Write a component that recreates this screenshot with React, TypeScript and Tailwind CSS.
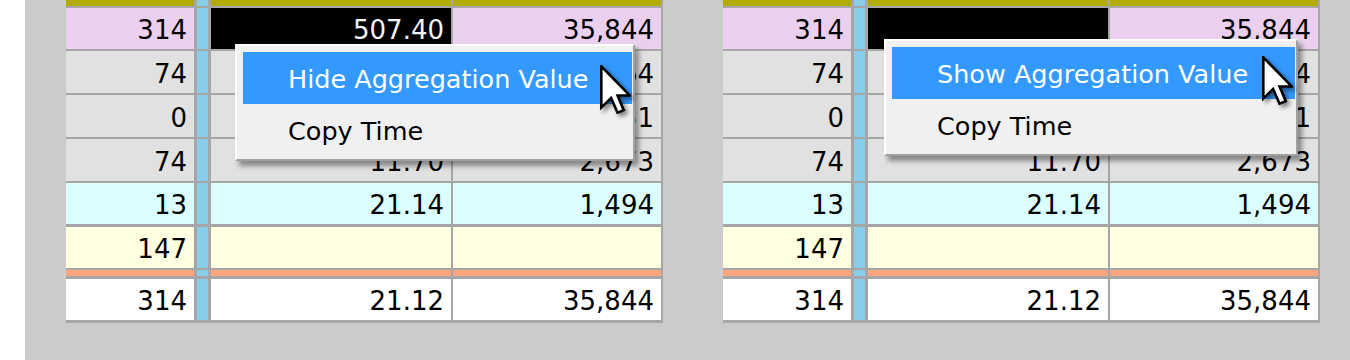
import React from 'react';

type Row = {
    bg: string;
    h: string;
    cells: [string, string, string];
    black?: boolean;
};

const font = { fontFamily: '"DejaVu Sans", Verdana, sans-serif' };

const makeRows = (aggValue: string): Row[] => [
    { bg: 'bg-[#ead0ee]', h: 'h-[41px]', cells: ['314', aggValue, '35,844'], black: true },
    { bg: 'bg-[#e1e1e1]', h: 'h-[42px]', cells: ['74', '13.33', '9,864'] },
    { bg: 'bg-[#e1e1e1]', h: 'h-[42px]', cells: ['0', '11.82', '3,751'] },
    { bg: 'bg-[#e1e1e1]', h: 'h-[42px]', cells: ['74', '11.70', '2,673'] },
    { bg: 'bg-[#dbffff]', h: 'h-[41px]', cells: ['13', '21.14', '1,494'] },
    { bg: 'bg-[#ffffe2]', h: 'h-[41px]', cells: ['147', '', ''] },
];

const cellText = "flex items-center justify-end pr-[7px] pt-[3px] text-[26px] text-black leading-none";

const BandRow: React.FC<{ color: string; h: string }> = ({ color, h }) => (
    <div className={`flex ${h}`}>
        <div className={`w-[128px] ${color}`}></div>
        <div className="ml-[3px] w-[11px] bg-[#87ceeb]"></div>
        <div className={`ml-[3px] w-[240px] ${color}`}></div>
        <div className={`ml-[2px] w-[208px] ${color}`}></div>
    </div>
);

const DataRow: React.FC<{ row: Row }> = ({ row }) => (
    <div className={`flex ${row.h}`}>
        <div className={`w-[128px] ${row.bg} ${cellText}`}>{row.cells[0]}</div>
        <div className="ml-[3px] w-[11px] bg-[#87ceeb]"></div>
        <div className={`ml-[3px] w-[240px] ${cellText} ${row.black ? 'bg-black !text-[#f4f4f4]' : row.bg}`}>{row.cells[1]}</div>
        <div className={`ml-[2px] w-[208px] ${row.bg} ${cellText}`}>{row.cells[2]}</div>
    </div>
);

const Cursor: React.FC<{ className: string }> = ({ className }) => (
    <svg viewBox="0 0 12 19" width="31" height="49" className={`absolute ${className}`} style={{ filter: 'drop-shadow(3px 3px 2px rgba(0,0,0,0.45))' }}>
        <path d="M0.5 0.5 L0.5 16.5 L4.3 12.8 L6.8 18.5 L9.2 17.5 L6.8 11.8 L11.5 11.8 Z" fill="#fff" stroke="#000" strokeWidth="1" strokeLinejoin="miter" />
    </svg>
);

const ContextMenu: React.FC<{ label: string; className: string }> = ({ label, className }) => (
    <div className={`absolute flex flex-col bg-[#f0f0f0] border-2 border-t-white border-l-white border-r-[#a0a0a0] border-b-[#a0a0a0] pl-[6px] pt-[6px] pr-[1px] pb-[3px] shadow-[4px_5px_5px_rgba(0,0,0,0.4)] ${className}`}>
        <div className="h-[52px] flex items-center pl-[45px] pt-[4px] bg-[#3399ff] text-white text-[25.5px] leading-none">{label}</div>
        <div className="h-[52px] flex items-center pl-[45px] pt-[4px] text-black text-[25.5px] leading-none">Copy Time</div>
    </div>
);

const Table: React.FC<{ aggValue: string; menuLabel: string; menuClass: string; cursorClass: string }> = ({ aggValue, menuLabel, menuClass, cursorClass }) => (
    <div className="relative w-[597px] h-[323px] flex flex-col gap-[2px] bg-[#a6a6a6] pr-[2px]">
        <BandRow color="bg-[#b2ab00]" h="h-[6px]" />
        {makeRows(aggValue).map((row, i) => (
            <div key={i} className={i === 5 ? 'mt-[1px]' : ''}>
                <DataRow row={row} />
            </div>
        ))}
        <BandRow color="bg-[#ffa57d]" h="h-[6px]" />
        <div className="mt-[1px]">
            <DataRow row={{ bg: 'bg-white', h: 'h-[41px]', cells: ['314', '21.12', '35,844'] }} />
        </div>
        <ContextMenu label={menuLabel} className={menuClass} />
        <Cursor className={cursorClass} />
    </div>
);

export default function App() {
    return (
        <div className="flex h-[360px] w-[1350px] bg-white" style={font}>
            <div className="ml-[25px] flex-1 bg-[#cbcbcb] pl-[41px] flex gap-[60px] items-start">
                <Table aggValue="507.40" menuLabel="Hide Aggregation Value" menuClass="left-[169px] top-[44px] w-[400px]" cursorClass="left-[534px] top-[65px]" />
                <Table aggValue="" menuLabel="Show Aggregation Value" menuClass="left-[161px] top-[39px] w-[414px]" cursorClass="left-[539px] top-[56px]" />
            </div>
        </div>
    );
}
